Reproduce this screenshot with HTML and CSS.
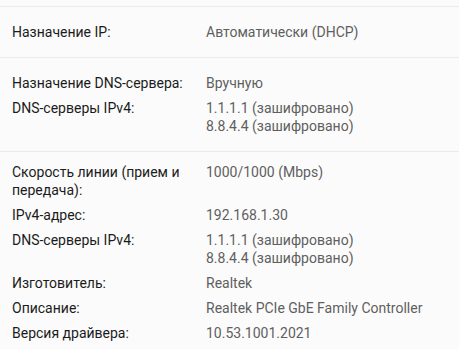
FILE: index.html
```html
<!DOCTYPE html>
<html lang="ru">

<head>
    <meta charset="UTF-8" />
    <meta name="viewport" content="width=device-width, initial-scale=1.0" />
    <title>Свойства Ethernet</title>
    <link rel="stylesheet" href="styles.css">
</head>

<body>
    <div class="prev-end"></div>

    <div class="section">
        <div class="label">Назначение IP:</div>
        <div class="value">Автоматически (DHCP)</div>
    </div>

    <div class="section">
        <div class="label">Назначение DNS-сервера:</div>
        <div class="value">Вручную</div>

        <div class="label">DNS-серверы IPv4:</div>
        <div class="value">1.1.1.1 (зашифровано)<br>8.8.4.4 (зашифровано)</div>
    </div>

    <div class="section section-tight">
        <div class="label">Скорость линии (прием и передача):</div>
        <div class="value">1000/1000 (Mbps)</div>

        <div class="label">IPv4-адрес:</div>
        <div class="value">192.168.1.30</div>

        <div class="label">DNS-серверы IPv4:</div>
        <div class="value">1.1.1.1 (зашифровано)<br>8.8.4.4 (зашифровано)</div>

        <div class="label">Изготовитель:</div>
        <div class="value">Realtek</div>

        <div class="label">Описание:</div>
        <div class="value">Realtek PCIe GbE Family Controller</div>

        <div class="label">Версия драйвера:</div>
        <div class="value">10.53.1001.2021</div>
    </div>
</body>

</html>
```

FILE: styles.css
```css
body {
    font-family: "Segoe UI", Roboto, "Noto Sans", sans-serif;
    font-size: 14px;
    line-height: 18px;
    background: #fbfbfb;
    margin: 0;
}

.prev-end {
    height: 6px;
}

.section {
    display: grid;
    grid-template-columns: 194px 1fr;
    row-gap: 7px;
    padding: 16px 12px;
    border-top: 1px solid #ebebeb;
}

.section-tight {
    padding-top: 11px;
}

.label {
    color: #1b1b1b;
    padding-right: 10px;
}

.value {
    color: #5f5f5f;
}
```
